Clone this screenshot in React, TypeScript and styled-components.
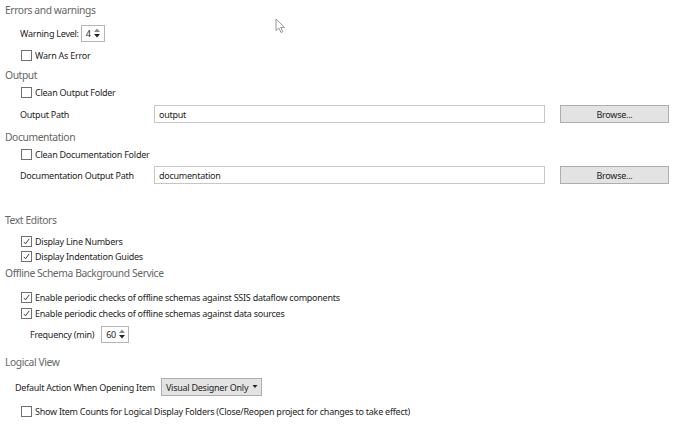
import React from "react";
import styled, { createGlobalStyle } from "styled-components";

const Global = createGlobalStyle`
  html, body { margin: 0; padding: 0; background: #ffffff; }
  body {
    font-family: "Noto Sans", "Open Sans", "Liberation Sans", sans-serif;
    font-size: 9px;
    letter-spacing: -0.25px;
    color: #1e1e1e;
    width: 675px;
    height: 424px;
    overflow: hidden;
  }
`;

const Page = styled.div`
  position: relative;
  width: 675px;
  height: 424px;
  padding-left: 5px;
  box-sizing: border-box;
  display: flex;
  flex-direction: column;
`;

const Header = styled.div<{ $mt: number }>`
  height: 14px;
  margin-top: ${(p) => p.$mt}px;
  display: flex;
  align-items: center;
  font-size: 10.3px;
  letter-spacing: -0.4px;
  color: #666666;
  white-space: nowrap;
`;

const Row = styled.div<{ $mt: number; $indent: number }>`
  height: 14px;
  margin-top: ${(p) => p.$mt}px;
  padding-left: ${(p) => p.$indent}px;
  display: flex;
  align-items: center;
  white-space: nowrap;
`;

const Label = styled.span<{ $w?: number }>`
  display: inline-block;
  width: ${(p) => (p.$w ? `${p.$w}px` : "auto")};
  flex: none;
`;

const Box = styled.span`
  width: 11px;
  height: 11px;
  box-sizing: border-box;
  border: 1px solid #707070;
  background: #fff;
  margin-right: 3px;
  flex: none;
  display: flex;
  align-items: center;
  justify-content: center;
`;

const Spin = styled.span<{ $w: number; $ml: number }>`
  width: ${(p) => p.$w}px;
  height: 17px;
  margin-left: ${(p) => p.$ml}px;
  box-sizing: border-box;
  border: 1px solid #b5b5b5;
  background: #fff;
  display: flex;
  align-items: center;
  padding-left: 4px;
  flex: none;
`;

const SpinValue = styled.span`
  flex: 1;
`;

const Arrows = styled.span`
  width: 9px;
  display: flex;
  flex-direction: column;
  align-items: center;
  gap: 2px;
  margin-right: 2px;
`;

const TextInput = styled.span`
  width: 391px;
  height: 18px;
  box-sizing: border-box;
  border: 1px solid #c6c6c6;
  background: #fff;
  display: flex;
  align-items: center;
  padding-left: 4px;
  flex: none;
`;

const Button = styled.span`
  width: 109px;
  height: 18px;
  margin-left: 15px;
  box-sizing: border-box;
  border: 1px solid #adadad;
  background: #e3e3e3;
  display: flex;
  align-items: center;
  justify-content: center;
  flex: none;
`;

const Select = styled.span`
  width: 101px;
  height: 18px;
  margin-left: 6px;
  box-sizing: border-box;
  border: 1px solid #adadad;
  background: #e3e3e3;
  display: flex;
  align-items: center;
  padding-left: 4px;
  flex: none;
`;

const SelectText = styled.span`
  flex: 1;
`;

const Cursor = styled.svg`
  position: absolute;
  left: 275px;
  top: 18px;
`;

const Check = ({ checked }: { checked?: boolean }) => (
  <Box>
    {checked && (
      <svg width="9" height="9" viewBox="0 0 9 9">
        <path d="M1.8 4.9 L3.6 6.8 L7.2 1.8" fill="none" stroke="#3a3a3a" strokeWidth="1" />
      </svg>
    )}
  </Box>
);

const SpinArrows = () => (
  <Arrows>
    <svg width="6" height="4" viewBox="0 0 6 4">
      <path d="M0 4 L3 0.5 L6 4 Z" fill="#8a8a8a" />
    </svg>
    <svg width="6" height="4" viewBox="0 0 6 4">
      <path d="M0 0 L3 3.5 L6 0 Z" fill="#222" />
    </svg>
  </Arrows>
);

export default function App() {
  return (
    <>
      <Global />
      <Page>
        <Header $mt={3}>Errors and warnings</Header>
        <Row $mt={9} $indent={15}>
          <Label>Warning Level:</Label>
          <Spin $w={24} $ml={2}>
            <SpinValue>4</SpinValue>
            <SpinArrows />
          </Spin>
        </Row>
        <Row $mt={8} $indent={16}>
          <Check />
          Warn As Error
        </Row>

        <Header $mt={6}>Output</Header>
        <Row $mt={3} $indent={16}>
          <Check />
          Clean Output Folder
        </Row>
        <Row $mt={8} $indent={15}>
          <Label $w={134}>Output Path</Label>
          <TextInput>output</TextInput>
          <Button>Browse...</Button>
        </Row>

        <Header $mt={9}>Documentation</Header>
        <Row $mt={3} $indent={16}>
          <Check />
          Clean Documentation Folder
        </Row>
        <Row $mt={7} $indent={15}>
          <Label $w={134}>Documentation Output Path</Label>
          <TextInput>documentation</TextInput>
          <Button>Browse...</Button>
        </Row>

        <Header $mt={31}>Text Editors</Header>
        <Row $mt={7} $indent={16}>
          <Check checked />
          Display Line Numbers
        </Row>
        <Row $mt={1} $indent={16}>
          <Check checked />
          Display Indentation Guides
        </Row>

        <Header $mt={3}>Offline Schema Background Service</Header>
        <Row $mt={10} $indent={16}>
          <Check checked />
          Enable periodic checks of offline schemas against SSIS dataflow components
        </Row>
        <Row $mt={2} $indent={16}>
          <Check checked />
          Enable periodic checks of offline schemas against data sources
        </Row>
        <Row $mt={7} $indent={25}>
          <Label>Frequency (min)</Label>
          <Spin $w={28} $ml={7}>
            <SpinValue>60</SpinValue>
            <SpinArrows />
          </Spin>
        </Row>

        <Header $mt={14}>Logical View</Header>
        <Row $mt={11} $indent={10}>
          <Label>Default Action When Opening Item</Label>
          <Select>
            <SelectText>Visual Designer Only</SelectText>
            <svg width="12" height="6" viewBox="0 0 12 6">
              <path d="M3.5 1 L8.5 1 L6 4 Z" fill="#222" />
            </svg>
          </Select>
        </Row>
        <Row $mt={10} $indent={16}>
          <Check />
          Show Item Counts for Logical Display Folders (Close/Reopen project for changes to take effect)
        </Row>

        <Cursor width="12" height="16" viewBox="0 0 12 16">
          <path d="M1 1 L1 12.5 L3.8 10 L6 14.5 L7.8 13.6 L5.7 9.4 L9.5 9.4 Z" fill="#fff" stroke="#8a8a8a" strokeWidth="0.9" strokeLinejoin="round" />
        </Cursor>
      </Page>
    </>
  );
}
